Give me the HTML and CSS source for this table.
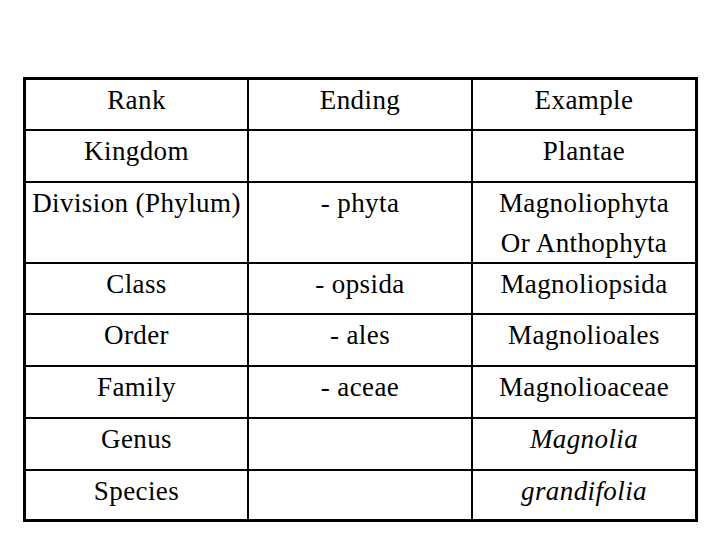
FILE: index.html
```html
<!DOCTYPE html>
<html>
<head>
<meta charset="utf-8">
<link rel="stylesheet" href="styles.css">
</head>
<body>
<div class="table">
  <div class="cell">Rank</div><div class="cell">Ending</div><div class="cell">Example</div>
  <div class="cell">Kingdom</div><div class="cell"></div><div class="cell">Plantae</div>
  <div class="cell">Division (Phylum)</div><div class="cell">- phyta</div><div class="cell">Magnoliophyta<br>Or Anthophyta</div>
  <div class="cell">Class</div><div class="cell">- opsida</div><div class="cell">Magnoliopsida</div>
  <div class="cell">Order</div><div class="cell">- ales</div><div class="cell">Magnolioales</div>
  <div class="cell">Family</div><div class="cell">- aceae</div><div class="cell">Magnolioaceae</div>
  <div class="cell">Genus</div><div class="cell"></div><div class="cell italic">Magnolia</div>
  <div class="cell">Species</div><div class="cell"></div><div class="cell italic">grandifolia</div>
</div>
</body>
</html>
```
FILE: styles.css
```css
html, body {
  margin: 0;
  padding: 0;
  background: #fff;
}
.table {
  margin: 77px 0 0 23px;
  width: 669px;
  display: grid;
  grid-template-columns: 221px 222px 222px;
  grid-template-rows: 49px 50px 79px 49px 50px 50px 50px 48px;
  gap: 2px;
  background: #000;
  border: 3px solid #000;
}
.cell {
  background: #fff;
  text-align: center;
  font-family: "Liberation Serif", "Times New Roman", serif;
  font-size: 27px;
  letter-spacing: 0.4px;
  line-height: 40px;
  color: #000;
  overflow: hidden;
  white-space: nowrap;
}
.italic {
  font-style: italic;
}
```
